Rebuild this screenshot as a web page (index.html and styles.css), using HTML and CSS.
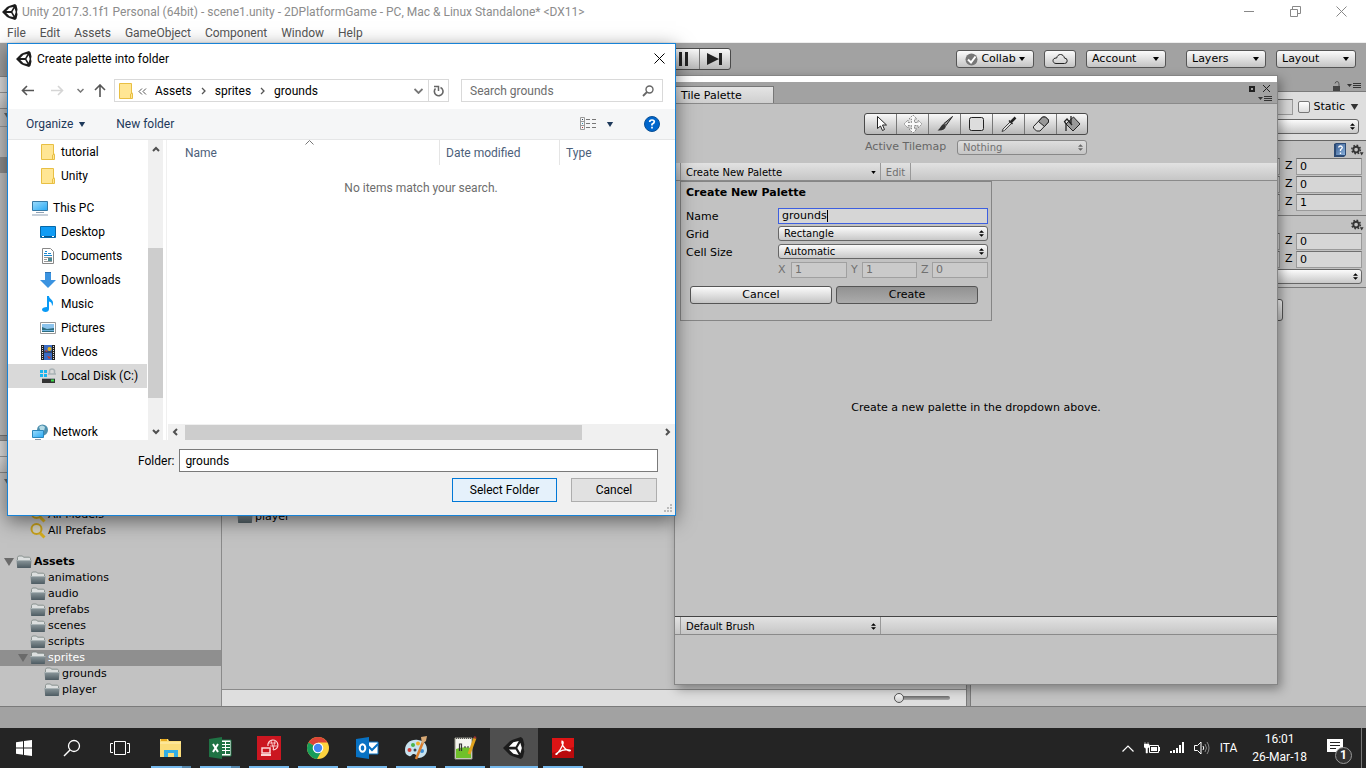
FILE: index.html
```html
<!DOCTYPE html>
<html lang="en">
<head>
    <meta charset="UTF-8">
    <meta name="viewport" content="width=device-width, initial-scale=1.0">
    <title>Unity 2017.3.1f1 Personal (64bit)</title>
    <link rel="stylesheet" href="styles.css">
</head>
<body>
    <!-- Shared icons -->
    <svg class="defs" width="0" height="0" aria-hidden="true">
        <defs>
            <linearGradient id="gFolder" x1="0" y1="0" x2="0" y2="1">
                <stop offset="0" stop-color="#8d999d"/>
                <stop offset="1" stop-color="#4d5b62"/>
            </linearGradient>
            <linearGradient id="gScreen" x1="0" y1="0" x2="1" y2="1">
                <stop offset="0" stop-color="#9edcfb"/>
                <stop offset="1" stop-color="#27a9f5"/>
            </linearGradient>
            <linearGradient id="gBook" x1="0" y1="0" x2="1" y2="1">
                <stop offset="0" stop-color="#3b5f92"/>
                <stop offset="1" stop-color="#88b0dc"/>
            </linearGradient>
        </defs>
        <symbol id="unity" viewBox="0 0 16 16">
            <path d="M0 8 5 3 7 2 13 0 14.5 1.2 15.5 5.5 15 8 15.5 10.500 14.500 14.800 13 16 7 14 5 13z" fill="#1c1c1c"/>
            <path d="M4.300 7 7.500 3.800 11.500 2.900 9.200 7zM4.300 9 7.500 12.200 11.500 13.100 9.200 9zM12.600 4.200 13.700 8 12.600 11.800 10.400 8z" fill="#fff"/>
        </symbol>
        <symbol id="folder" viewBox="0 0 16 16">
            <path d="M1.500 7V3.500L2.500 2h4l1 1.200h6l1 1V8z" fill="#dcdfdf" stroke="#77827f" stroke-width=".8"/>
            <path d="M.5 6h15l-.7 8H1.200z" fill="url(#gFolder)"/>
            <path d="M.5 6.500h15" stroke="#a9b3b5"/>
        </symbol>
        <symbol id="winfolder" viewBox="0 0 14 16">
            <path d="M.5.5h12v10h1v5H.5z" fill="#ffe694" stroke="#e8bf43"/>
            <path d="M11.500 15V11l2-1" fill="none" stroke="#e8bf43"/>
        </symbol>
        <symbol id="updown" viewBox="0 0 6 8">
            <path d="M0 3 3 0 6 3zM0 5 3 8 6 5z" fill="currentColor"/>
        </symbol>
        <symbol id="caret" viewBox="0 0 6 4">
            <path d="M0 0h6L3 4z" fill="currentColor"/>
        </symbol>
        <symbol id="fold" viewBox="0 0 10 8">
            <path d="M0 0h10L5 8z" fill="currentColor"/>
        </symbol>
        <symbol id="magnify" viewBox="0 0 16 16">
            <circle cx="6.500" cy="6" r="5" fill="#d5d2c0" stroke="#c9a21c" stroke-width="2"/>
            <path d="M10 10l4.500 4.500" stroke="#d6ad1d" stroke-width="3"/>
        </symbol>
        <symbol id="gear" viewBox="0 0 14 12">
            <circle cx="5.500" cy="5.500" r="3" fill="none" stroke="#333" stroke-width="2"/>
            <circle cx="5.500" cy="5.500" r="4.600" fill="none" stroke="#333" stroke-width="1.600" stroke-dasharray="1.800 1.800"/>
            <path d="M9.500 8.500h4L11.500 12z" fill="#333"/>
        </symbol>
        <symbol id="panemenu" viewBox="0 0 14 6">
            <path d="M0 1h5L2.500 4z" fill="#333"/>
            <path d="M6 .5h8M6 2.500h8M6 4.500h8" stroke="#333"/>
        </symbol>
    </svg>

    <header class="titlebar">
        <svg class="i16"><use href="#unity"/></svg>
        <span class="title">Unity 2017.3.1f1 Personal (64bit) - scene1.unity - 2DPlatformGame - PC, Mac &amp; Linux Standalone* &lt;DX11&gt;</span>
        <div class="win-controls">
            <button aria-label="Minimize"><svg width="11" height="11"><path d="M0 5.500h10" stroke="#888"/></svg></button>
            <button aria-label="Restore"><svg width="11" height="11"><path d="M.5 3.500h7v7h-7zM2.500 3V.5h8v7H8" fill="none" stroke="#888"/></svg></button>
            <button aria-label="Close"><svg width="11" height="11"><path d="M.5.5l10 10M10.500.5l-10 10" stroke="#888"/></svg></button>
        </div>
    </header>
    <nav class="menubar">
        <a>File</a><a>Edit</a><a>Assets</a><a>GameObject</a><a>Component</a><a>Window</a><a>Help</a>
    </nav>

    <main class="editor">
        <div class="toolbar">
            <div></div>
            <div class="play-group">
                <button aria-label="Play"><svg width="16" height="14"><path d="M2 1l12 6-12 6z" fill="#222"/></svg></button>
                <button aria-label="Pause"><svg width="16" height="14"><path d="M3 0h3v14H3zM9 0h3v14H9z" fill="#222"/></svg></button>
                <button aria-label="Step"><svg width="16" height="14"><path d="M0 1l12 6-12 6zM12 1h3v12h-3z" fill="#222"/></svg></button>
            </div>
            <div class="toolbar-right">
                <button class="u-btn collab">
                    <svg width="13" height="13"><circle cx="6.500" cy="6.500" r="6" fill="#777"/><path d="M3 6.500l3 3 4.500-6" fill="none" stroke="#fff" stroke-width="2"/></svg>
                    Collab <svg class="caret"><use href="#caret"/></svg>
                </button>
                <button class="u-btn cloud" aria-label="Cloud"><svg width="16" height="12"><path d="M4 10.500h8.500a2.700 2.700 0 0 0 0-5.400C12 3 10.500 1.500 8.500 1.500S5 3 4.700 5C2 4.700 1 6.500 1 7.700S2 10.500 4 10.500z" fill="none" stroke="#222"/></svg></button>
                <button class="u-btn drop">Account <svg class="caret"><use href="#caret"/></svg></button>
                <button class="u-btn drop layers">Layers <svg class="caret"><use href="#caret"/></svg></button>
                <button class="u-btn drop">Layout <svg class="caret"><use href="#caret"/></svg></button>
            </div>
        </div>

        <div class="panels">
            <div class="left-panels">
                <section class="hierarchy">
                    <div class="tab-strip"></div>
                    <div class="strip"></div>
                    <div class="scene-row"><svg class="fold"><use href="#fold"/></svg></div>
                    <div class="hierarchy-rows"><div class="picked"></div></div>
                </section>
                <section class="project">
                    <div class="tab-strip"></div>
                    <div class="strip"></div>
                    <div class="project-body">
                        <ul class="tree">
                            <li class="row"><svg class="fold first"><use href="#fold"/></svg></li>
                            <li class="row"></li>
                            <li class="row in1"><svg class="i16"><use href="#magnify"/></svg>All Models</li>
                            <li class="row in1"><svg class="i16"><use href="#magnify"/></svg>All Prefabs</li>
                            <li class="row gap"></li>
                            <li class="row root"><svg class="fold"><use href="#fold"/></svg><svg class="i16"><use href="#folder"/></svg>Assets</li>
                            <li class="row in1"><svg class="i16"><use href="#folder"/></svg>animations</li>
                            <li class="row in1"><svg class="i16"><use href="#folder"/></svg>audio</li>
                            <li class="row in1"><svg class="i16"><use href="#folder"/></svg>prefabs</li>
                            <li class="row in1"><svg class="i16"><use href="#folder"/></svg>scenes</li>
                            <li class="row in1"><svg class="i16"><use href="#folder"/></svg>scripts</li>
                            <li class="row sub selected"><svg class="fold"><use href="#fold"/></svg><svg class="i16"><use href="#folder"/></svg>sprites</li>
                            <li class="row in2"><svg class="i16"><use href="#folder"/></svg>grounds</li>
                            <li class="row in2"><svg class="i16"><use href="#folder"/></svg>player</li>
                        </ul>
                        <div class="assets">
                            <div class="asset-list">
                                <div class="row"><svg class="i16"><use href="#folder"/></svg>player</div>
                            </div>
                            <div class="asset-footer"><input type="range" min="0" max="100" value="0" aria-label="Icon size"></div>
                        </div>
                    </div>
                </section>
            </div>

            <aside class="inspector">
                <div class="insp-tabs">
                    <svg width="10" height="10"><path d="M1 5h7v5H1z" fill="#444"/><path d="M3 2.500Q3.500.5 5 .5q2 0 2 2.500v2" fill="none" stroke="#555"/></svg>
                    <svg width="14" height="6"><use href="#panemenu"/></svg>
                </div>
                <div class="insp-head">
                    <div class="insp-line">
                        <input class="u-field grow" type="text" aria-label="Object name">
                        <label class="static"><input type="checkbox">Static</label>
                        <svg class="static-caret"><use href="#fold"/></svg>
                    </div>
                    <div class="insp-line"><span class="u-select grow"><select aria-label="Layer"><option></option></select><svg><use href="#updown"/></svg></span></div>
                </div>
                <div class="component">
                    <div class="comp-title">
                        <svg width="13" height="14"><path d="M1 1l2-1h10v12l-2 2H1z" fill="#2c4a74"/><path d="M3 1h9v11H3z" fill="url(#gBook)"/><path d="M5.500 4.500Q6 3 7.500 3t1.800 1.500Q9.300 5.500 7.500 6.800V8M7.500 9.500v1.500" fill="none" stroke="#fff" stroke-width="1.300"/></svg>
                        <svg class="gear"><use href="#gear"/></svg>
                    </div>
                    <div class="vec"><input class="u-field grow" type="text" aria-label="Position Y"><label for="pz">Z</label><input class="u-field" id="pz" type="text" value="0"></div>
                    <div class="vec"><input class="u-field grow" type="text" aria-label="Rotation Y"><label for="rz">Z</label><input class="u-field" id="rz" type="text" value="0"></div>
                    <div class="vec"><input class="u-field grow" type="text" aria-label="Scale Y"><label for="sz">Z</label><input class="u-field" id="sz" type="text" value="1"></div>
                </div>
                <div class="component grid-component">
                    <div class="comp-title"><svg class="gear"><use href="#gear"/></svg></div>
                    <div class="vec"><input class="u-field grow" type="text" aria-label="Cell Size Y"><label for="cz">Z</label><input class="u-field" id="cz" type="text" value="0"></div>
                    <div class="vec"><input class="u-field grow" type="text" aria-label="Cell Gap Y"><label for="gz">Z</label><input class="u-field" id="gz" type="text" value="0"></div>
                    <div class="vec"><span class="u-select grow"><select aria-label="Cell Swizzle"><option></option></select><svg><use href="#updown"/></svg></span></div>
                </div>
                <button class="u-btn add-component" aria-label="Add Component"></button>
            </aside>
        </div>
        <div class="statusbar"></div>
    </main>

    <!-- Tile palette window -->
    <section class="palette">
        <div class="pal-caption"></div>
        <div class="pal-tabs">
            <div class="pal-tab">Tile Palette</div>
            <div class="pal-controls">
                <div>
                    <svg width="6" height="6"><path d="M1 1h4v4H1z" fill="none" stroke="#222" stroke-width="2"/></svg>
                    <svg width="9" height="9"><path d="M1 1l7 7M8 1L1 8" stroke="#222"/></svg>
                </div>
                <svg width="14" height="6"><use href="#panemenu"/></svg>
            </div>
        </div>
        <div class="tools">
            <button aria-label="Select"><svg width="18" height="18"><path d="M5.500 1.500v12l3-2.500 2 4.500 2-1-2-4.500h4z" fill="#fff" stroke="#222"/></svg></button>
            <button aria-label="Move"><svg width="18" height="18"><path d="M9 0l4 4h-2.500v3.500H14V5l4 4-4 4v-2.500h-3.500V14H13l-4 4-4-4h2.500v-3.500H4V13L0 9l4-4v2.500h3.500V4H5z" fill="#fafafa" stroke="#777" stroke-width=".8" stroke-dasharray="2 1"/></svg></button>
            <button aria-label="Brush"><svg width="18" height="18"><path d="M16.500 1.500L8 8.500l2 2z" fill="#999" stroke="#222"/><path d="M8 9l2 2c-1 4-4 5-8.500 4.500C4 14 5 9.500 8 9z" fill="#333"/></svg></button>
            <button aria-label="Box fill"><svg width="18" height="18"><rect x="1.500" y="2.500" width="14" height="13" rx="2" fill="#ddd" stroke="#222"/></svg></button>
            <button aria-label="Picker"><svg width="18" height="18"><path d="M10 7l-7 7-1 2.500L4.500 15.500l7-7" fill="#ddd" stroke="#444"/><path d="M9 5.500l3.500 3.500" stroke="#222" stroke-width="1.500"/><path d="M11 7l4.500-4.500" stroke="#222" stroke-width="2.500"/></svg></button>
            <button aria-label="Eraser"><svg width="18" height="18"><path d="M1.500 11.500l9-9.500h3l3 3v2l-8.500 9H4.500l-3-3z" fill="#ddd" stroke="#222"/><path d="M6.500 6.500l4-4.500h3l3 3v2l-4 4.500z" fill="#999" stroke="#222"/></svg></button>
            <button aria-label="Fill"><svg width="18" height="18"><path d="M10.500 2l6.500 7-7 7-7-7z" fill="#999" stroke="#222"/><path d="M3 16V9L1.500 6.500 4 4l5 6M8 1v8" fill="none" stroke="#222" stroke-width="1.300"/></svg></button>
        </div>
        <div class="active-map">
            <label for="tilemap">Active Tilemap</label>
            <span class="u-select"><select id="tilemap" disabled><option>Nothing</option></select><svg><use href="#updown"/></svg></span>
        </div>
        <div class="bar">
            <button class="bar-drop">Create New Palette <svg class="caret"><use href="#caret"/></svg></button>
            <button class="bar-edit" disabled>Edit</button>
        </div>
        <div class="pal-view">
            <form class="new-palette">
                <h2>Create New Palette</h2>
                <div class="field">
                    <label for="pname">Name</label>
                    <span class="focus-field"><input class="u-field" id="pname" type="text" value="grounds"><i class="cursor"></i></span>
                </div>
                <div class="field">
                    <label for="pgrid">Grid</label>
                    <span class="u-select"><select id="pgrid"><option>Rectangle</option></select><svg><use href="#updown"/></svg></span>
                </div>
                <div class="field">
                    <label for="pcell">Cell Size</label>
                    <span class="u-select"><select id="pcell"><option>Automatic</option></select><svg><use href="#updown"/></svg></span>
                </div>
                <div class="xyz">
                    <label for="px">X</label><input class="u-field" id="px" type="text" value="1" disabled>
                    <label for="py">Y</label><input class="u-field" id="py" type="text" value="1" disabled>
                    <label for="pz2">Z</label><input class="u-field" id="pz2" type="text" value="0" disabled>
                </div>
                <div class="form-buttons">
                    <button type="button" class="u-btn">Cancel</button>
                    <button type="button" class="u-btn pressed">Create</button>
                </div>
            </form>
            <p class="hint">Create a new palette in the dropdown above.</p>
        </div>
        <div class="bar brush-bar">
            <button class="bar-drop">Default Brush <svg class="ud"><use href="#updown"/></svg></button>
        </div>
        <div class="brush-view"></div>
    </section>

    <!-- Folder picker -->
    <section class="dialog">
        <div class="dlg-title">
            <svg class="i16"><use href="#unity"/></svg>
            <span>Create palette into folder</span>
            <button aria-label="Close"><svg width="11" height="11"><path d="M.5.5l10 10M10.500.5l-10 10" stroke="#000"/></svg></button>
        </div>
        <div class="dlg-nav">
            <button aria-label="Back"><svg width="13" height="11"><path d="M6 1L1.500 5.500 6 10M2 5.500h11" fill="none" stroke="#555" stroke-width="1.600"/></svg></button>
            <button aria-label="Forward"><svg width="13" height="11"><path d="M7 1l4.500 4.500L7 10M11 5.500H0" fill="none" stroke="#d5d5d5" stroke-width="1.600"/></svg></button>
            <button class="recent" aria-label="Recent locations"><svg width="7" height="5"><path d="M.5 1l3 3 3-3" fill="none" stroke="#777" stroke-width="1.500"/></svg></button>
            <button class="up" aria-label="Up"><svg width="12" height="13"><path d="M1 6l5-5 5 5M6 1.500V13" fill="none" stroke="#555" stroke-width="1.600"/></svg></button>
            <div class="address">
                <svg width="14" height="16"><use href="#winfolder"/></svg>
                <svg class="sep" width="9" height="7"><path d="M4 .5l-3 3 3 3M8 .5l-3 3 3 3" fill="none" stroke="#555"/></svg>
                <a>Assets</a>
                <svg class="sep" width="5" height="8"><path d="M1 1l3 3-3 3" fill="none" stroke="#555" stroke-width="1.300"/></svg>
                <a>sprites</a>
                <svg class="sep" width="5" height="8"><path d="M1 1l3 3-3 3" fill="none" stroke="#555" stroke-width="1.300"/></svg>
                <a>grounds</a>
                <button class="history" aria-label="Previous locations"><svg width="9" height="6"><path d="M.5 1l4 4 4-4" fill="none" stroke="#777" stroke-width="1.800"/></svg></button>
                <button class="refresh" aria-label="Refresh"><svg width="11" height="12"><path d="M7.500 2.500A4.300 4.300 0 1 1 2.500 3.500" fill="none" stroke="#666" stroke-width="1.600"/><path d="M1 1.500h4.500v4.500" fill="none" stroke="#666" stroke-width="1.500"/></svg></button>
            </div>
            <div class="search">
                <input type="text" placeholder="Search grounds" aria-label="Search grounds">
                <svg width="12" height="12"><circle cx="7.500" cy="4.500" r="3.500" fill="none" stroke="#666" stroke-width="1.400"/><path d="M5 7L1 11" stroke="#666" stroke-width="1.800"/></svg>
            </div>
        </div>
        <div class="dlg-commands">
            <button>Organize <svg width="8" height="5"><use href="#fold"/></svg></button>
            <button>New folder</button>
            <button class="view" aria-label="Change view">
                <svg width="17" height="14"><path d="M.5.5h4v12h-4zM.5 4.500h4M.5 8.500h4" fill="none" stroke="#999"/><path d="M6 2.500h4M12 2.500h4M6 6.500h4M12 6.500h4M6 10.500h4M12 10.500h4" stroke="#777"/><path d="M2 2h1v1H2z" fill="#345"/><path d="M2 6h1v1H2z" fill="#38a"/><path d="M2 10h1v1H2z" fill="#a33"/></svg>
                <svg width="8" height="5"><use href="#fold"/></svg>
            </button>
            <button class="help" aria-label="Help"><svg width="16" height="16"><circle cx="8" cy="8" r="7.500" fill="#0066cc" stroke="#0a4f94"/><path d="M5.700 6Q5.700 4 8 4t2.300 1.800Q10.300 7 8 8.300v1.200M8 10.800v1.700" fill="none" stroke="#fff" stroke-width="1.700"/></svg></button>
        </div>
        <div class="dlg-body">
            <ul class="places">
                <li class="deep"><svg width="14" height="16"><use href="#winfolder"/></svg>tutorial</li>
                <li class="deep"><svg width="14" height="16"><use href="#winfolder"/></svg>Unity</li>
                <li class="top"><svg width="16" height="16"><path d="M.5 1.500h15v9H.5z" fill="url(#gScreen)" stroke="#3679a5"/><path d="M4 12.500h8M0 15h16" stroke="#8fa1b5"/></svg>This PC</li>
                <li class="deep"><svg width="16" height="16"><path d="M.5 2.500h15v11H.5z" fill="#109cf5" stroke="#0668a8"/><path d="M1 12.500h14" stroke="#07568f"/><path d="M2 12.500h2M12 12.500h2" stroke="#fff"/></svg>Desktop</li>
                <li class="deep"><svg width="16" height="16"><path d="M2.500.5h8l3 3v12h-11z" fill="#fff" stroke="#888"/><path d="M4 7.500h8M4 5.500h3M8 5.500h3M5 3.500h2" stroke="#1987cf"/><path d="M4 9.500h8M4 11.500h3M4 13.500h8" stroke="#999"/><path d="M8 10h4v3H8z" fill="#4a8a94"/></svg>Documents</li>
                <li class="deep"><svg width="16" height="16"><path d="M5 0h6v8h5l-8 8-8-8h5z" fill="#3b93e0"/><path d="M5 .5h6" stroke="#2b72b5"/></svg>Downloads</li>
                <li class="deep"><svg width="16" height="16"><path d="M7 0h2c0 3 4 3.500 4 7 0 1.500-.5 2.500-1 3 0-3-1-4-3-4.500V13c0 2-1.500 3-3.500 3S2 15 2 13.500 4 11 7 11z" fill="#0a9af5"/></svg>Music</li>
                <li class="deep"><svg width="16" height="16"><path d="M.5 2.500h15v11H.5z" fill="#fff" stroke="#999"/><path d="M2 4h12v8H2z" fill="#8cc3ec"/><path d="M2 7l5 2 7-1v4H2z" fill="#2d6d80"/><path d="M2 10.500h12" stroke="#6fb3df"/></svg>Pictures</li>
                <li class="deep"><svg width="16" height="16"><path d="M1 1h14v15H1z" fill="#222"/><path d="M4 1h8v15H4z" fill="#3a6cc4"/><path d="M4 8h8" stroke="#222"/><path d="M2.500 2v14M13.500 2v14" stroke="#ddd" stroke-dasharray="1 1"/><circle cx="9.500" cy="5" r="2" fill="#e6b220"/><path d="M5 6l3 1-2 1zM7 12l4 1-2 2z" fill="#c83a28"/></svg>Videos</li>
                <li class="deep current"><svg width="16" height="16"><path d="M0 2h3v3H0zM4 2h3v3H4zM0 6h3v3H0zM4 6h3v3H4z" fill="#18b5ee"/><path d="M8 6h8M9.500 6V2.500Q10 1 12 1t2.500 1.500V6" fill="none" stroke="#a9b2b5" stroke-width="1.500"/><path d="M2 11h13v4H2z" fill="#333"/><path d="M2 10.500h13" stroke="#9ba8ab"/><path d="M11 12.500h3" stroke="#3ce04a" stroke-width="2"/></svg>Local Disk (C:)</li>
                <li class="top network"><svg width="16" height="16"><circle cx="10.500" cy="6" r="5.500" fill="#4d8fae"/><path d="M7 3q3-3 6 0l-1 4-3 1zM14 8l1-3" fill="#b5dbe6"/><path d="M.5 6.500h11v7H.5z" fill="url(#gScreen)" stroke="#2a87bd"/><path d="M3 15.500h6" stroke="#89a"/></svg>Network</li>
            </ul>
            <div class="vscroll">
                <svg width="8" height="6"><path d="M1 5l3-3 3 3" fill="none" stroke="#505050" stroke-width="2"/></svg>
                <div class="vtrack"><div class="vthumb"></div></div>
                <svg width="8" height="6"><path d="M1 1l3 3 3-3" fill="none" stroke="#505050" stroke-width="2"/></svg>
            </div>
            <div class="files">
                <div class="columns">
                    <span class="c-name">Name<svg width="9" height="5"><path d="M.5 4.500l4-4 4 4" fill="none" stroke="#777"/></svg></span>
                    <span class="c-date">Date modified</span>
                    <span>Type</span>
                </div>
                <p class="empty">No items match your search.</p>
                <div class="hscroll">
                    <svg width="6" height="8"><path d="M5 1L2 4l3 3" fill="none" stroke="#505050" stroke-width="2"/></svg>
                    <div class="htrack"><div class="hthumb"></div></div>
                    <svg width="6" height="8"><path d="M1 1l3 3-3 3" fill="none" stroke="#505050" stroke-width="2"/></svg>
                </div>
            </div>
        </div>
        <form class="dlg-footer">
            <div class="folder-line"><label for="folder">Folder:</label><input type="text" id="folder" value="grounds"></div>
            <div class="dlg-buttons">
                <button type="button" class="default">Select Folder</button>
                <button type="button">Cancel</button>
            </div>
            <svg class="grip" width="9" height="9"><path d="M6 0h2v2H6zM3 3h2v2H3zM6 3h2v2H6zM0 6h2v2H0zM3 6h2v2H3zM6 6h2v2H6z" fill="#bbb"/></svg>
        </form>
    </section>

    <footer class="taskbar">
        <button class="sys" aria-label="Start"><svg width="16" height="16"><path d="M0 2.200L7 1.200v6.300H0zM8 1l8-1v7.500H8zM0 8.500h7v6.300l-7-1zM8 8.500h8V16l-8-1z" fill="#fff"/></svg></button>
        <button class="sys" aria-label="Search"><svg width="18" height="18"><circle cx="11" cy="7" r="5.500" fill="none" stroke="#fff" stroke-width="1.300"/><path d="M7 11l-6 6" stroke="#fff" stroke-width="1.400"/></svg></button>
        <button class="sys" aria-label="Task view"><svg width="20" height="14"><path d="M4.500.5h11v13h-11zM3 2.500H.5v9H3M17 2.500h2.500v9H17" fill="none" stroke="#fff"/></svg></button>
        <div class="apps">
            <button class="app multi" aria-label="File Explorer"><svg width="24" height="24"><path d="M1 4V3h8l1 2h12v16H1z" fill="#fbdd7a"/><path d="M2 3h6v2H2z" fill="#e6a91e"/><path d="M1 7h21" stroke="#fff0b5"/><path d="M5 14h14v7h-4v-4H9v4H5z" fill="#33aee4"/></svg></button>
            <button class="app multi" aria-label="Excel"><svg width="24" height="24"><path d="M12 4h11v16H12z" fill="#fff" stroke="#1f7244"/><path d="M14 6h3v2h-3zM18 6h4v2h-4zM14 9h3v2h-3zM18 9h4v2h-4zM14 12h3v2h-3zM18 12h4v2h-4zM14 15h3v3h-3zM18 15h4v3h-4z" fill="#1f7244"/><path d="M1 3l13-2v22L1 21z" fill="#1f7244"/><path d="M5 8l5 8M10 8l-5 8" stroke="#fff" stroke-width="2"/></svg></button>
            <button class="app" aria-label="Remote connection"><svg width="24" height="24"><path d="M0 0h24v24H0z" fill="#cb1620"/><path d="M5 12h8v5H5z" fill="none" stroke="#fbd5d5" stroke-width="1.500"/><path d="M4 18h10v2H4z" fill="#fbd5d5"/><path d="M11 10a5 5 0 1 1 5 4" fill="none" stroke="#fbd5d5" stroke-width="1.200"/><path d="M12 7h7M13 10h7M14 5l3 9M18 5l-2 9" stroke="#fbd5d5" stroke-width=".8"/></svg></button>
            <button class="app" aria-label="Chrome"><svg width="24" height="24"><circle cx="12" cy="12" r="11" fill="#fdd23e"/><path d="M12 12L2.500 6.500A11 11 0 0 1 21.500 6.500H12z" fill="#dc4437"/><path d="M2.500 6.500A11 11 0 0 0 11 23l5-8.700-4-2.300z" fill="#179c5a"/><circle cx="12" cy="12" r="5.300" fill="#fff"/><circle cx="12" cy="12" r="4.200" fill="#4486f4"/></svg></button>
            <button class="app" aria-label="Outlook"><svg width="24" height="24"><path d="M12 6h11v12H12z" fill="#fff" stroke="#0872c4"/><path d="M13 10l4 4 6-6" fill="none" stroke="#0872c4" stroke-width="2"/><path d="M1 3l13-2v22L1 21z" fill="#0872c4"/><ellipse cx="7.500" cy="12" rx="2.800" ry="3.800" fill="none" stroke="#fff" stroke-width="2"/></svg></button>
            <button class="app" aria-label="Paint"><svg width="24" height="24"><path d="M1 14C1 7 7 3 14 4s9 5 9 10-5 8-8 8-2-4-5-4-2 3-5 2-4-3-4-6z" fill="#c7e2ef"/><circle cx="5.500" cy="14" r="2" fill="#d43e35"/><circle cx="9" cy="9" r="2" fill="#4bb44a"/><circle cx="14" cy="7.500" r="2" fill="#f0b02a"/><circle cx="11" cy="14" r="1.500" fill="#345"/><circle cx="18" cy="15" r="2" fill="#3c8dd4"/><path d="M12 23l7-17" stroke="#d97d2d" stroke-width="2.500"/><path d="M17 1l6-1-1 5-4 3z" fill="#d9aa76"/></svg></button>
            <button class="app" aria-label="Notepad++"><svg width="24" height="24"><path d="M2 2h17v21H2z" fill="#f4f4ee" stroke="#9a9a8a"/><path d="M3 13Q10 10 18 12v10H3z" fill="#6fc02a"/><path d="M3 2h15" stroke="#555" stroke-width="2" stroke-dasharray="1 1"/><path d="M6.500 15V8h2v7M11 11h2M14 11h2" fill="none" stroke="#333" stroke-width="1.200"/><path d="M22 2l-6 16" stroke="#e0a21d" stroke-width="3"/><path d="M21 1l2 1" stroke="#933" stroke-width="2"/></svg></button>
            <button class="app active" aria-label="Unity"><svg width="22" height="22"><use href="#unity"/></svg></button>
            <button class="app" aria-label="Acrobat Reader"><svg width="22" height="20"><path d="M0 0h22v20H0z" fill="#b90a0c"/><path d="M0 0h22v9L0 15z" fill="#dd1415"/><path d="M10 3c3 0 0 7-5 13-1 1-2 0 0-1 4-2.500 9-4 13-3 1.500 1-1 1.500-3 0C12 10 9 6 10 3z" fill="none" stroke="#fff" stroke-width="1.200"/></svg></button>
        </div>
        <div class="tray">
            <svg width="12" height="7"><path d="M.5 6.500L6 1l5.500 5.500" fill="none" stroke="#fff" stroke-width="1.200"/></svg>
            <svg width="16" height="12"><path d="M5.500 3.500h9v7h-9z" fill="none" stroke="#fff"/><path d="M7 5h6v4H7zM15 5h1v4h-1z" fill="#fff"/><path d="M0 2h5v3L3.500 6.500V11H2V6.500L0 5zM1 0v2M4 0v2" fill="#fff" stroke="#fff" stroke-width=".5"/></svg>
            <svg width="14" height="12"><path d="M0 9h2v2H0zM3 8h2v3H3zM6 6h2v5H6zM9 3h2v8H9zM12 0h2v11h-2z" fill="#fff"/></svg>
            <svg width="16" height="14"><path d="M.5 4.500h3L7 1v12L3.500 9.500h-3z" fill="none" stroke="#fff"/><path d="M9 5q1.500 2 0 4" fill="none" stroke="#fff"/><path d="M11 3q3 4 0 8M13 1q4 6 0 12" fill="none" stroke="#888"/></svg>
            <span>ITA</span>
            <time>16:01<br>26-Mar-18</time>
            <button class="notify" aria-label="Notifications"><svg width="24" height="24"><path d="M0 0h16v13h-4l-3 3v-3H0z" fill="#fff"/><path d="M3 3.500h10M3 6.500h10M3 9.500h6" stroke="#242424"/></svg><b>1</b></button>
        </div>
    </footer>
</body>
</html>
```
FILE: styles.css
```css
* {
    box-sizing: border-box;
}

body {
    margin: 0;
    height: 100vh;
    display: flex;
    flex-direction: column;
    overflow: hidden;
    position: relative;
    background: #fff;
    font: 12px/16px Roboto, "Open Sans", sans-serif;
    color: #000;
}

button, input, select {
    font: inherit;
    color: inherit;
    margin: 0;
    padding: 0;
    border: 0;
    border-radius: 0;
    background: none;
    outline: none;
    min-width: 0;
}

ul, p, h2 {
    margin: 0;
    padding: 0;
    list-style: none;
}

svg {
    display: block;
    flex: none;
}

.defs {
    position: absolute;
}

.i16 {
    width: 16px;
    height: 16px;
}

/* main window caption and menu */
.titlebar {
    display: flex;
    align-items: center;
    height: 23px;
    padding: 0 2px;
    color: #8c8c8c;
}

.title {
    padding-left: 4px;
}

.win-controls {
    display: flex;
    margin-left: auto;
}

.win-controls button {
    width: 46px;
    display: flex;
    justify-content: center;
}

.menubar {
    display: flex;
    gap: 14px;
    height: 20px;
    padding: 2px 7px;
    color: #555;
    border-bottom: 1px solid #eee;
}

/* editor */
.editor {
    flex: 1;
    min-height: 0;
    display: flex;
    flex-direction: column;
    background: #a2a2a2;
    font: 11px/16px "DejaVu Sans", Verdana, sans-serif;
}

.toolbar {
    display: grid;
    grid-template-columns: 1fr auto 1fr;
    align-items: center;
    height: 33px;
    padding-bottom: 1px;
}

.play-group, .tools {
    display: flex;
    border: 1px solid #4a4a4a;
    border-radius: 3px;
    overflow: hidden;
    background: linear-gradient(#f8f8f8, #b8b8b8);
}

.play-group button {
    width: 31px;
    height: 20px;
    display: flex;
    align-items: center;
    justify-content: center;
}

.play-group button + button, .tools button + button {
    border-left: 1px solid #777;
}

.toolbar-right {
    display: flex;
    justify-content: flex-end;
    gap: 10px;
    padding-right: 10px;
}

.u-btn {
    display: flex;
    align-items: center;
    justify-content: center;
    height: 18px;
    border: 1px solid #555;
    border-radius: 3px;
    background: linear-gradient(#fbfbfb, #c4c4c4);
}

.caret {
    width: 6px;
    height: 4px;
}

.collab {
    width: 78px;
    gap: 3px;
}

.cloud {
    width: 32px;
}

.drop {
    width: 80px;
    justify-content: space-between;
    padding: 0 6px 0 5px;
}

.layers {
    margin-left: 10px;
}

.panels {
    flex: 1;
    min-height: 0;
    display: flex;
    gap: 3px;
}

.left-panels {
    flex: 1;
    min-width: 0;
    display: flex;
    flex-direction: column;
    gap: 4px;
}

.hierarchy, .project {
    border-right: 1px solid #7a7a7a;
    background: #c2c2c2;
}

.hierarchy {
    flex: 1;
    min-height: 0;
    border-bottom: 1px solid #7a7a7a;
}

.tab-strip {
    height: 16px;
    background: #dedede;
    border-top: 1px solid #8a8a8a;
}

.strip {
    height: 17px;
    background: linear-gradient(#dedede, #c6c6c6);
    border-top: 1px solid #999;
    border-bottom: 1px solid #8a8a8a;
}

.scene-row {
    height: 18px;
    padding: 4px;
    border-bottom: 1px solid #999;
}

.hierarchy-rows {
    padding-top: 30px;
}

.picked {
    height: 16px;
    background: #8f8f8f;
}

.project-body {
    display: grid;
    grid-template-columns: 222px 1fr;
}

.tree {
    padding: 2px 0 8px;
    border-right: 1px solid #8a8a8a;
}

.row {
    display: flex;
    align-items: center;
    height: 16px;
    gap: 2px;
    line-height: 18px;
}

.in1 {
    padding-left: 30px;
}

.in2 {
    padding-left: 44px;
}

.gap {
    height: 15px;
}

.root, .scene-row {
    padding-left: 4px;
}

.root {
    font-weight: bold;
}

.sub {
    padding-left: 18px;
}

.fold {
    width: 10px;
    height: 8px;
    color: #6a6a6a;
}

.first {
    margin-left: 4px;
}

.selected {
    background: #8f8f8f;
    color: #fff;
}

.assets {
    display: flex;
    flex-direction: column;
    justify-content: space-between;
}

.asset-list {
    padding: 36px 15px 0;
}

.asset-footer {
    display: flex;
    justify-content: flex-end;
    align-items: center;
    height: 17px;
    padding-right: 16px;
    background: #dedede;
    border-top: 1px solid #8a8a8a;
}

.asset-footer input {
    appearance: none;
    width: 56px;
    height: 4px;
    border-radius: 2px;
    background: linear-gradient(#6a6a6a, #aaa);
}

.asset-footer input::-webkit-slider-thumb {
    appearance: none;
    width: 10px;
    height: 10px;
    border: 1px solid #555;
    border-radius: 50%;
    background: linear-gradient(#fff, #ccc);
}

.statusbar {
    height: 22px;
    border-top: 1px solid #7a7a7a;
}

/* inspector */
.inspector {
    width: 29%;
    background: #c2c2c2;
    border-left: 1px solid #7a7a7a;
}

.insp-tabs {
    display: flex;
    align-items: center;
    justify-content: flex-end;
    gap: 5px;
    height: 16px;
    padding-top: 4px;
    padding-right: 5px;
    background: #a2a2a2;
    border-bottom: 1px solid #7a7a7a;
}

.insp-head {
    padding: 7px 7px 6px 20px;
    background: #dedede;
    border-bottom: 1px solid #666;
    height: 49px;
    display: flex;
    flex-direction: column;
    gap: 4px;
}

.insp-line {
    display: flex;
    align-items: center;
    height: 16px;
}

.grow {
    flex: 1;
}

.u-field {
    height: 16px;
    padding: 0 3px;
    border: 1px solid #9a9a9a;
    border-top-color: #6f6f6f;
    background: #d6d6d6;
}

.static {
    display: flex;
    align-items: center;
    gap: 4px;
    padding: 0 5px;
}

.static input {
    appearance: none;
    width: 12px;
    height: 12px;
    border: 1px solid #777;
    border-radius: 2px;
    background: linear-gradient(#fff, #ddd);
}

.static-caret {
    width: 9px;
    height: 6px;
    color: #333;
}

.u-select {
    position: relative;
    display: flex;
}

.u-select select {
    appearance: none;
    width: 100%;
    height: 15px;
    padding: 0 5px;
    border: 1px solid #666;
    border-radius: 3px;
    background: linear-gradient(#fbfbfb, #c8c8c8);
    font-size: 10px;
    line-height: 13px;
}

.u-select svg {
    position: absolute;
    right: 4px;
    top: 4px;
    width: 5px;
    height: 7px;
}

.component {
    padding-bottom: 3px;
    border-bottom: 1px solid #7a7a7a;
}

.grid-component {
    padding-bottom: 0;
}

.comp-title {
    display: flex;
    justify-content: flex-end;
    align-items: center;
    gap: 5px;
    height: 17px;
    padding-right: 2px;
}

.gear {
    width: 13px;
    height: 12px;
}

.vec {
    display: flex;
    align-items: flex-start;
    height: 18px;
    padding: 0 4px 0 20px;
}

.vec label {
    width: 16px;
    padding-left: 5px;
}

.vec .u-field {
    height: 17px;
}

.vec label + .u-field {
    width: 66px;
}

.add-component {
    width: 230px;
    height: 22px;
    margin: 11px auto 0;
}

/* tile palette window */
.palette {
    position: absolute;
    left: 674px;
    top: 75px;
    width: 604px;
    height: 610px;
    display: flex;
    flex-direction: column;
    border: 1px solid #858585;
    background: #c2c2c2;
    box-shadow: 3px 4px 10px rgba(0, 0, 0, 0.35);
    font: 11px/16px "DejaVu Sans", Verdana, sans-serif;
}

.pal-caption {
    height: 6px;
    background: #fff;
}

.pal-tabs {
    display: flex;
    align-items: flex-end;
    justify-content: space-between;
    height: 22px;
    background: #a2a2a2;
    border-bottom: 1px solid #8a8a8a;
}

.pal-tab {
    width: 99px;
    height: 17px;
    padding: 0 6px;
    line-height: 18px;
    background: linear-gradient(#e4e4e4, #cfcfcf);
    border: 1px solid #777;
    border-width: 1px 1px 0 0;
}

.pal-controls {
    display: flex;
    flex-direction: column;
    align-items: flex-end;
    gap: 3px;
    padding: 0 5px 1px 0;
}

.pal-controls div {
    display: flex;
    align-items: center;
    gap: 7px;
    padding-right: 1px;
}

.tools {
    align-self: center;
    margin-top: 9px;
}

.tools button {
    width: 32px;
    height: 20px;
    display: flex;
    align-items: center;
    justify-content: center;
}

.tools button:first-child, .tools button:last-child {
    width: 31px;
}

.active-map {
    display: flex;
    align-self: center;
    align-items: center;
    justify-content: space-between;
    width: 222px;
    height: 16px;
    margin: 4px 0 8px;
    color: #666;
}

.active-map label {
    line-height: 18px;
}

.active-map .u-select {
    width: 130px;
}

.active-map select {
    border-color: #888;
    background: linear-gradient(#dedede, #c6c6c6);
}

select:disabled, input:disabled {
    color: #707070;
    opacity: 1;
}

.bar {
    display: flex;
    height: 18px;
    padding-left: 5px;
    background: linear-gradient(#e2e2e2, #c6c6c6);
    border-bottom: 1px solid #8a8a8a;
    font-size: 10px;
}

.bar button {
    padding-top: 2px;
    border-right: 1px solid #999;
}

.bar .bar-drop {
    display: flex;
    align-items: center;
    justify-content: space-between;
    width: 201px;
    padding: 2px 4px 0 5px;
    border-left: 1px solid #999;
}

.bar-drop .caret {
    width: 5px;
    height: 3px;
}

.bar-drop .ud {
    width: 5px;
    height: 7px;
}

.bar-edit {
    width: 30px;
    color: #707070;
}

.pal-view {
    flex: 1;
}

.new-palette {
    width: 312px;
    height: 140px;
    margin-left: 5px;
    padding: 2px 3px 0 5px;
    border: 1px solid #858585;
}

.new-palette h2 {
    height: 24px;
    font: bold 11px/18px "DejaVu Sans", Verdana, sans-serif;
}

.field {
    display: grid;
    grid-template-columns: 92px 1fr;
    align-items: start;
    height: 18px;
    line-height: 18px;
}

.focus-field {
    position: relative;
    display: flex;
}

.focus-field .u-field {
    width: 100%;
    border: 1px solid #3d5fe0;
}

.cursor {
    position: absolute;
    left: 49px;
    top: 2px;
    width: 1px;
    height: 12px;
    background: #000;
}

.xyz {
    display: grid;
    grid-template-columns: 13px 56px 15px 55px 15px 56px;
    align-items: start;
    justify-content: end;
    height: 18px;
    color: #707070;
}

.xyz label + input + label {
    padding-left: 4px;
}

.xyz .u-field {
    background: #cacaca;
    border-color: #a0a0a0;
}

.form-buttons {
    display: flex;
    gap: 4px;
    margin-top: 6px;
    padding-left: 4px;
}

.form-buttons .u-btn {
    width: 142px;
}

.pressed {
    background: linear-gradient(#929292, #ababab);
}

.hint {
    margin-top: 79px;
    text-align: center;
}

.brush-bar {
    border-top: 1px solid #444;
    height: 19px;
}

.brush-view {
    height: 49px;
}

/* folder dialog */
.dialog {
    position: absolute;
    left: 7px;
    top: 43px;
    width: 669px;
    height: 473px;
    display: flex;
    flex-direction: column;
    background: #fff;
    border: 1px solid #1883d7;
    box-shadow: 0 5px 18px rgba(0, 0, 0, 0.5);
}

.dialog button {
    display: flex;
    align-items: center;
    justify-content: center;
}

.dlg-title {
    display: flex;
    align-items: center;
    height: 30px;
    padding: 0 10px 1px 8px;
    gap: 5px;
}

.dlg-title button {
    margin-left: auto;
}

.dlg-nav {
    display: flex;
    align-items: center;
    height: 35px;
    padding: 0 12px 2px;
}

.dlg-nav > button {
    width: 14px;
    margin-right: 16px;
}

.dlg-nav > .recent {
    margin-left: -7px;
    margin-right: 6px;
}

.dlg-nav > .up {
    margin-right: 7px;
}

.address {
    display: flex;
    align-items: center;
    width: 335px;
    height: 23px;
    padding-left: 4px;
    border: 1px solid #d9d9d9;
}

.address .sep {
    margin: 2px 8px 0 5px;
}

.address a + .sep {
    margin: 0 9px;
}

.history {
    margin-left: auto;
    width: 20px;
    height: 21px;
}

.address .refresh {
    width: 20px;
    height: 21px;
    border-left: 1px solid #d9d9d9;
}

.search {
    display: flex;
    align-items: center;
    flex: 1;
    height: 23px;
    margin-left: 12px;
    padding: 0 8px;
    border: 1px solid #d9d9d9;
}

.search input {
    flex: 1;
}

.search input::placeholder {
    color: #6d6d6d;
}

.dlg-commands {
    display: flex;
    align-items: center;
    height: 31px;
    padding: 0 15px 0 18px;
    gap: 30px;
    background: #f5f6f7;
    border-bottom: 1px solid #e5e6e7;
    color: #1e395b;
}

.dlg-commands button {
    gap: 5px;
}

.dlg-commands .view {
    gap: 9px;
    margin-left: auto;
}

.dlg-body {
    flex: 1;
    min-height: 0;
    display: flex;
}

.places {
    width: 139px;
    overflow: hidden;
}

.places li {
    display: flex;
    align-items: center;
    height: 24px;
    gap: 5px;
}

.places .deep {
    padding-left: 32px;
}

.deep svg {
    width: 16px;
}

.places .top {
    margin-top: 8px;
    padding-left: 24px;
}

.places .network {
    margin-top: 32px;
}

.places .current {
    background: #d9d9d9;
}

.vscroll {
    display: flex;
    flex-direction: column;
    align-items: center;
    width: 15px;
    margin-left: 1px;
    padding: 6px 0 5px;
    background: #f0f0f0;
}

.vtrack {
    flex: 1;
    width: 100%;
    display: flex;
    align-items: flex-end;
    padding-bottom: 31px;
}

.vthumb {
    width: 100%;
    height: 61%;
    background: #cdcdcd;
}

.files {
    flex: 1;
    display: flex;
    flex-direction: column;
    margin-left: 3px;
    border-left: 1px solid #f0f0f0;
}

.columns {
    display: flex;
    height: 25px;
    color: #4c607a;
}

.columns span {
    padding: 5px 6px 0;
    border-right: 1px solid #e5e5e5;
}

.columns span:last-child {
    border: 0;
}

.columns .c-name {
    position: relative;
    width: 273px;
    padding-left: 18px;
}

.c-name svg {
    position: absolute;
    left: 138px;
    top: 0;
}

.columns .c-date {
    width: 120px;
}

.empty {
    flex: 1;
    padding-top: 15px;
    text-align: center;
    color: #6d6d6d;
}

.hscroll {
    display: flex;
    align-items: center;
    height: 16px;
    margin-left: 1px;
    padding: 0 4px;
    background: #f0f0f0;
}

.htrack {
    flex: 1;
    margin: 0 7px;
}

.hthumb {
    width: 84%;
    height: 15px;
    background: #cdcdcd;
}

.dlg-footer {
    position: relative;
    height: 75px;
    padding: 9px 17px 0 130px;
    background: #f0f0f0;
}

.folder-line {
    display: flex;
    align-items: center;
    gap: 5px;
}

.folder-line input {
    flex: 1;
    height: 23px;
    padding: 0 5px;
    border: 1px solid #7a7a7a;
    background: #fff;
}

.dlg-buttons {
    display: flex;
    justify-content: flex-end;
    gap: 14px;
    margin-top: 6px;
    padding-right: 1px;
}

.dlg-buttons button {
    width: 86px;
    height: 24px;
    border: 1px solid #adadad;
    background: #e1e1e1;
}

.dlg-buttons .default {
    width: 105px;
    border-color: #0078d7;
    background: #e5f1fb;
}

.grip {
    position: absolute;
    right: 2px;
    bottom: 2px;
}

/* taskbar */
.taskbar {
    display: flex;
    height: 40px;
    background: #242424;
    color: #fff;
}

.taskbar button {
    display: flex;
    align-items: center;
    justify-content: center;
    width: 48px;
}

.apps {
    display: flex;
    gap: 1px;
    padding-left: 3px;
}

.app {
    position: relative;
}

.app::after {
    content: "";
    position: absolute;
    left: 4px;
    right: 4px;
    bottom: 0;
    height: 2px;
    background: #76b9ed;
}

.multi::after {
    background: linear-gradient(to right, #76b9ed 31px, #5586ab 31px);
}

.active {
    background: #4f4f4f;
}

.active::after {
    left: 0;
    right: 0;
}

.tray {
    display: flex;
    align-items: center;
    gap: 10px;
    margin-left: auto;
    margin-right: 4px;
    border-right: 1px solid #777;
}

.tray time {
    line-height: 18px;
    text-align: center;
    padding-left: 5px;
}

.taskbar .notify {
    position: relative;
    width: 44px;
    height: 40px;
    padding-top: 6px;
}

.notify b {
    position: absolute;
    right: 9px;
    bottom: 4px;
    width: 17px;
    height: 17px;
    border: 1px solid #999;
    border-radius: 50%;
    background: #333;
    line-height: 15px;
}
```
